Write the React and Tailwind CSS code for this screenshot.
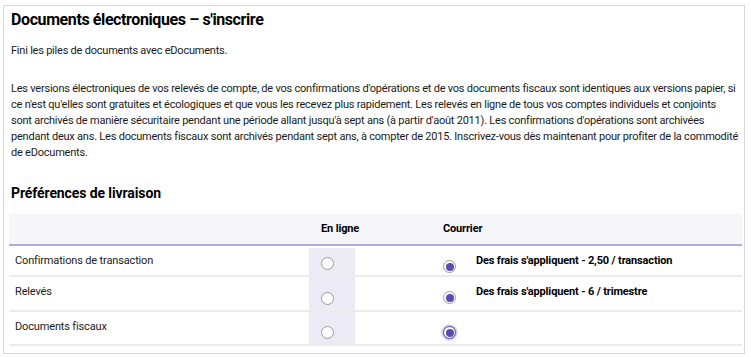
import React from 'react';

const rows = [
  { label: 'Confirmations de transaction', fee: "Des frais s'appliquent - 2,50 / transaction", h: 'h-[31px]' },
  { label: 'Relevés', fee: "Des frais s'appliquent - 6 / trimestre", h: 'h-[35px]' },
  { label: 'Documents fiscaux', fee: '', h: 'h-[34px]', focus: true },
];

function EmptyRadio() {
  return <span className="block w-[13px] h-[13px] rounded-full border border-[#9a9a9a] bg-white" />;
}

function CheckedRadio({ focus }) {
  return (
    <span
      className={`flex items-center justify-center w-[13px] h-[13px] rounded-full bg-white border ${
        focus ? 'border-[#5a4bb2] shadow-[0_0_2px_1px_rgba(110,95,200,0.55)]' : 'border-[#9a9a9a]'
      }`}
    >
      <span className="block w-[8px] h-[8px] rounded-full bg-[#5a4bb2]" />
    </span>
  );
}

export default function App() {
  return (
    <div className="w-[751px] h-[357px] bg-white pt-[5px] pl-[3px]" style={{ fontFamily: 'Roboto, "Liberation Sans", sans-serif' }}>
      <div className="w-[742px] h-[349px] border border-[#d6d6d6] text-[#1a1a1a]">
        <h1 className="pl-[7px] pt-[3px] text-[16px] leading-[22px] font-bold tracking-[-0.4px] text-black">
          Documents électroniques – s'inscrire
        </h1>
        <p className="pl-[7px] mt-[12px] text-[11px] leading-[16px] tracking-[-0.22px]">Fini les piles de documents avec eDocuments.</p>
        <p className="pl-[7px] pr-[2px] mt-[22px] text-[11px] leading-[16px] tracking-[-0.22px]">
          Les versions électroniques de vos relevés de compte, de vos confirmations d'opérations et de vos documents fiscaux sont identiques aux versions papier, si
          <br />
          ce n'est qu'elles sont gratuites et écologiques et que vous les recevez plus rapidement. Les relevés en ligne de tous vos comptes individuels et conjoints
          <br />
          sont archivés de manière sécuritaire pendant une période allant jusqu'à sept ans (à partir d'août 2011). Les confirmations d'opérations sont archivées
          <br />
          pendant deux ans. Les documents fiscaux sont archivés pendant sept ans, à compter de 2015. Inscrivez-vous dès maintenant pour profiter de la commodité
          <br />
          de eDocuments.
        </p>
        <h2 className="pl-[7px] mt-[22px] text-[14px] leading-[20px] font-bold tracking-[-0.1px] text-black">Préférences de livraison</h2>
        <div className="ml-[5px] mr-[2px] mt-[11px]">
          <div className="grid grid-cols-[300px_122px_1fr] h-[32px] bg-[#f5f5fa] border-b-2 border-[#b3a9dc] items-center text-[11px] font-bold tracking-[-0.15px] text-black">
            <div />
            <div className="pl-[12px]">En ligne</div>
            <div className="pl-[12px]">Courrier</div>
          </div>
          {rows.map((r, i) => (
            <div key={i} className={`grid grid-cols-[300px_122px_1fr] border-b-2 border-[#ececec] ${r.h}`}>
              <div className="pl-[6px] pt-[8px] text-[11px] leading-[14px] tracking-[-0.15px]">{r.label}</div>
              <div className={`w-[46px] bg-[#ecebf5] pl-[12px] flex items-end pb-[5px] ${i === 0 ? 'mt-[2px]' : ''}`}>
                <EmptyRadio />
              </div>
              <div className="pl-[12px] flex">
                <div className="pt-[14px]">
                  <CheckedRadio focus={r.focus} />
                </div>
                {r.fee && <div className="ml-[20px] pt-[8px] text-[11px] leading-[14px] font-bold tracking-[-0.15px] text-black">{r.fee}</div>}
              </div>
            </div>
          ))}
        </div>
      </div>
    </div>
  );
}
